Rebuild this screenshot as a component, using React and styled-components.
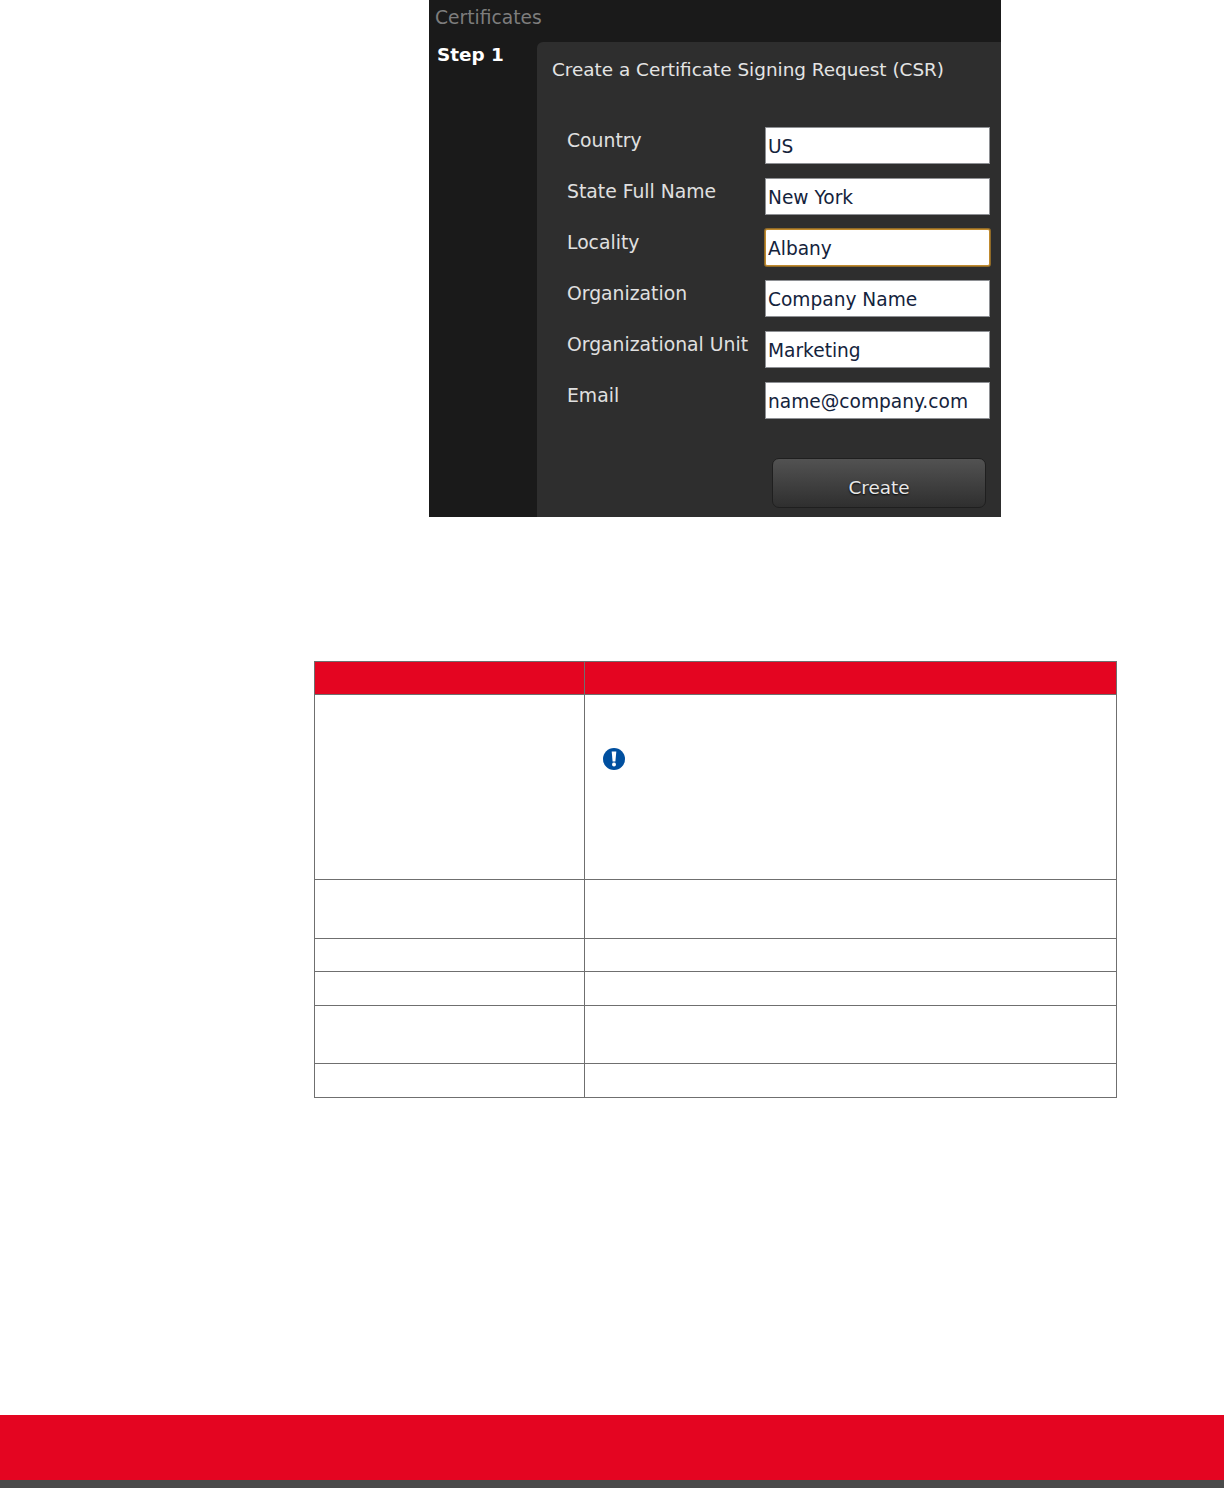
import React from "react";
import styled, { createGlobalStyle } from "styled-components";

const Global = createGlobalStyle`
  html, body { margin: 0; padding: 0; background: #fff; }
  body { font-family: "DejaVu Sans", sans-serif; }
`;
const Page = styled.div`
  width: 1224px; height: 1488px; display: flex; flex-direction: column; overflow: hidden;
`;
const Shot = styled.section`
  width: 572px; height: 517px; margin-left: 429px; background: #1a1a1a;
  display: flex; flex-direction: column; flex: none; overflow: hidden;
`;
const ShotTitle = styled.div`
  height: 42px; flex: none; padding: 6px 0 0 6px; box-sizing: border-box;
  color: #7d7d7d; font-size: 18.7px; line-height: 24px;
`;
const ShotBody = styled.div`flex: 1; display: flex; min-height: 0;`;
const Rail = styled.div`
  width: 108px; flex: none; padding: 0 0 0 8px; box-sizing: border-box;
  color: #fff; font-weight: 700; font-size: 18.4px; line-height: 25px;
`;
const Panel = styled.div`
  flex: 1; background: #2e2e2e; border-top-left-radius: 6px; padding: 15px 11px 0 15px;
  box-sizing: border-box; display: flex; flex-direction: column;
`;
const PanelTitle = styled.h2`
  margin: 0 0 30px; color: #e4e4e4; font-weight: 400; font-size: 18.4px; line-height: 26px; height: 40px;
`;
const Form = styled.div`
  display: grid; grid-template-columns: 198px 225px; padding-left: 15px; grid-auto-rows: 51px;
`;
const Label = styled.label`
  color: #e0e0e0; font-size: 18.8px; line-height: 24px; margin-top: 1.5px; white-space: nowrap;
`;
const Field = styled.input`
  width: 225px; height: 36.5px; box-sizing: border-box; margin: 0; padding: 2px 0 0 2px;
  background: #fff; color: #14233c; font: 400 18.6px "DejaVu Sans", sans-serif;
  border: 1px solid ${p => (p.$focus ? "#c08a2e" : "#8e9094")};
  border-radius: ${p => (p.$focus ? "2px" : "0")};
  box-shadow: ${p => (p.$focus ? "0 0 0 1px #8f6a28" : "none")};
  outline: none;
`;
const Actions = styled.div`display: flex; padding: 25px 0 0 220px;`;
const CreateButton = styled.button`
  width: 214px; height: 50px; flex: none; border-radius: 7px; border: 1px solid #1f1f1f;
  background: linear-gradient(#525252, #2f2f2f); color: #e8e8e8;
  font: 400 18.4px "DejaVu Sans", sans-serif; padding: 8px 0 0;
  text-shadow: 0 1px 2px #000;
`;
const Table = styled.table`
  width: 803px; margin: 144px 0 0 314px; flex: none; border-collapse: collapse; table-layout: fixed;
  border: 1px solid #6f6f6f;
`;
const Row = styled.tr`height: ${p => p.$h}px;`;
const Head = styled.th`
  background: #e40521; border: 1px solid #6f6f6f; padding: 0;
`;
const Cell = styled.td`
  border: 1px solid #6f6f6f; padding: 0; vertical-align: top;
`;
const NoteIcon = styled.svg`
  display: block; width: 22px; height: 22px; margin: 53px 0 0 18px;
`;
const Spacer = styled.div`flex: 1;`;
const FooterRed = styled.footer`height: 65px; flex: none; background: #e40521;`;
const FooterDark = styled.div`height: 8px; flex: none; background: #4a4a4a;`;

const fields = [
  ["Country", "US"],
  ["State Full Name", "New York"],
  ["Locality", "Albany", true],
  ["Organization", "Company Name"],
  ["Organizational Unit", "Marketing"],
  ["Email", "name@company.com"],
];
const rows = [59, 33, 34, 58, 34];

export default function App() {
  return (
    <Page>
      <Global />
      <Shot>
        <ShotTitle>Certificates</ShotTitle>
        <ShotBody>
          <Rail>Step 1</Rail>
          <Panel>
            <PanelTitle>Create a Certificate Signing Request (CSR)</PanelTitle>
            <Form>
              {fields.map(([l, v, f]) => (
                <React.Fragment key={l}>
                  <Label>{l}</Label>
                  <Field readOnly value={v} $focus={f} />
                </React.Fragment>
              ))}
            </Form>
            <Actions>
              <CreateButton>Create</CreateButton>
            </Actions>
          </Panel>
        </ShotBody>
      </Shot>
      <Table>
        <colgroup>
          <col style={{ width: 270 }} />
          <col />
        </colgroup>
        <thead>
          <Row $h={33}>
            <Head />
            <Head />
          </Row>
        </thead>
        <tbody>
          <Row $h={185}>
            <Cell />
            <Cell>
              <NoteIcon viewBox="0 0 22 22" aria-hidden="true">
                <circle cx="11" cy="11" r="11" fill="#004f9f" />
                <path d="M8.700 3.500h4.600l-.9 10h-2.800z" fill="#fff" />
                <circle cx="11" cy="16.600" r="2" fill="#fff" />
              </NoteIcon>
            </Cell>
          </Row>
          {rows.map((h, i) => (
            <Row key={i} $h={h}>
              <Cell />
              <Cell />
            </Row>
          ))}
        </tbody>
      </Table>
      <Spacer />
      <FooterRed />
      <FooterDark />
    </Page>
  );
}
